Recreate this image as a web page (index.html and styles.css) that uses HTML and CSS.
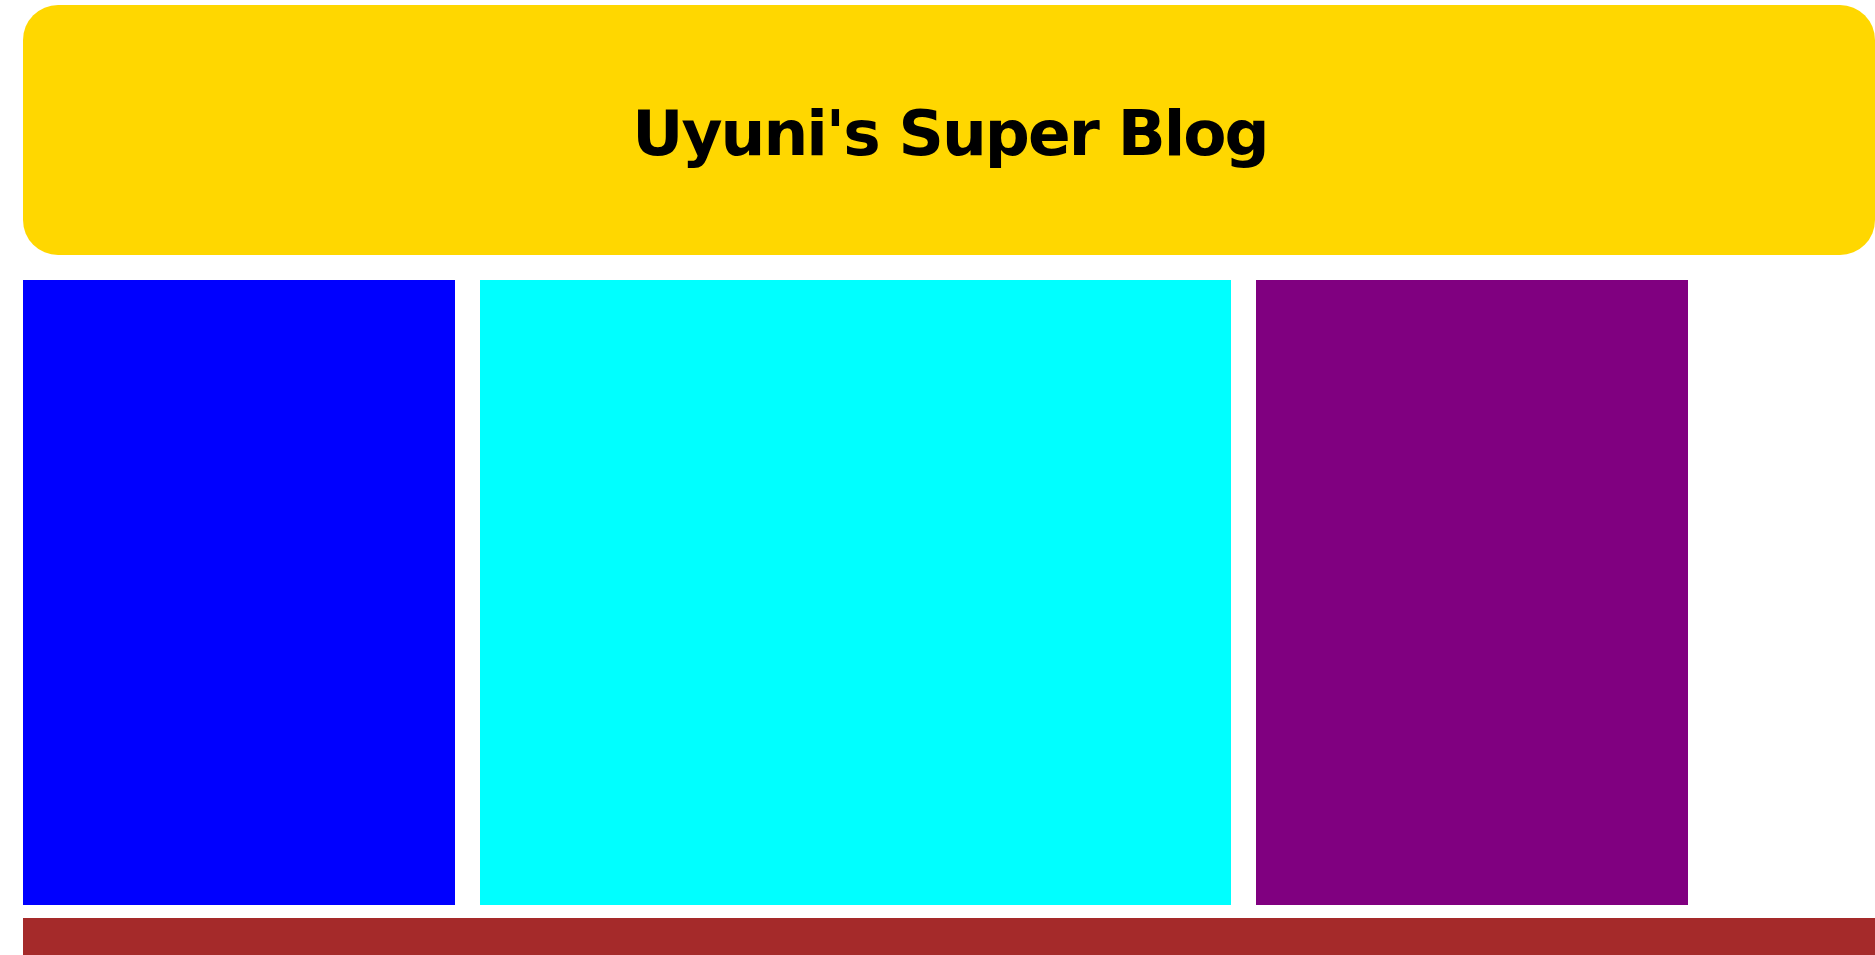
FILE: index.html
```html
<!DOCTYPE html>
<html lang="en">
<head>
<meta charset="utf-8">
<title>Uyuni's Super Blog</title>
<link rel="stylesheet" href="styles.css">
</head>
<body>
<div class="page">
  <header class="site-header">
    <h1 class="site-title">Uyuni's Super Blog</h1>
  </header>
  <main class="columns">
    <aside class="col col-left"></aside>
    <section class="col col-main"></section>
    <aside class="col col-right"></aside>
  </main>
  <footer class="site-footer"></footer>
</div>
</body>
</html>
```

FILE: styles.css
```css
html, body {
  margin: 0;
  padding: 0;
  overflow: hidden;
  background: #ffffff;
  font-family: "DejaVu Sans", sans-serif;
}

.page {
  padding: 5px 0 0 23px;
  display: flex;
  flex-direction: column;
}

.site-header {
  height: 250px;
  background: #ffd700;
  border-radius: 35px;
  display: flex;
  align-items: center;
  justify-content: center;
  padding-top: 6px;
  box-sizing: border-box;
}

.site-title {
  margin: 0;
  font-size: 63px;
  font-weight: bold;
  letter-spacing: -2px;
  color: #000000;
  padding-left: 2px;
}

.columns {
  margin-top: 25px;
  display: flex;
  gap: 25px;
  height: 625px;
}

.col-left {
  width: 432px;
  background: #0000ff;
}

.col-main {
  width: 751px;
  background: #00ffff;
}

.col-right {
  width: 432px;
  background: #800080;
}

.site-footer {
  margin-top: 13px;
  height: 60px;
  background: #a52a2a;
}
```
